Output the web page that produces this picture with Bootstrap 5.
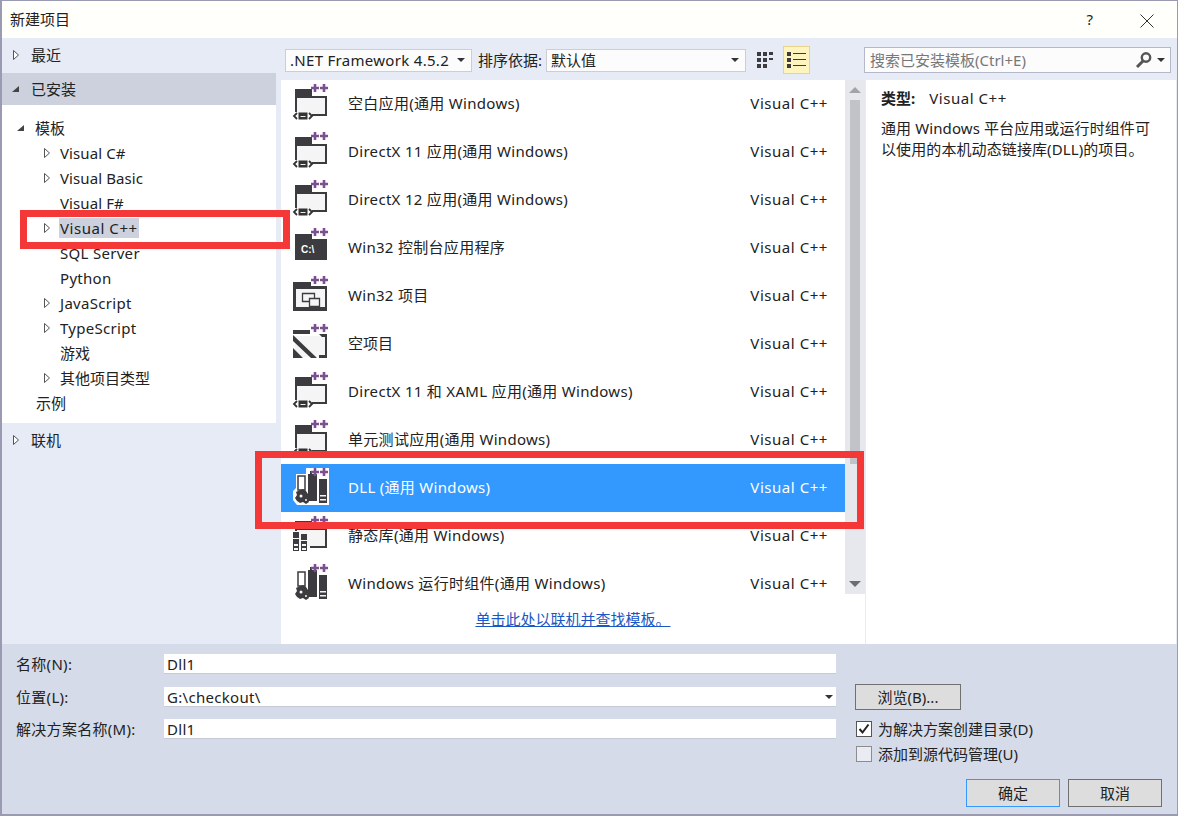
<!DOCTYPE html>
<html lang="zh-CN">
<head>
<meta charset="UTF-8" />
<title>新建项目</title>
<link href="https://cdn.jsdelivr.net/npm/bootstrap@5.3.0/dist/css/bootstrap.min.css" rel="stylesheet" />
<style>
    html, body { margin: 0; background: #fff; }
    body {
        font-family: "Noto Sans", "Noto Sans CJK SC", sans-serif;
        font-size: 15px;
        line-height: 20px;
        color: #222;
    }
    .defs-hold { position: absolute; }
    .lat { letter-spacing: .3px; }
    .lat-s { letter-spacing: .1px; }
    .vc { letter-spacing: .55px; }
    .dlg {
        position: relative;
        width: 1178px;
        height: 816px;
        overflow: hidden;
        border: 1px solid #9a9ab2;
        border-bottom-width: 2px;
        border-left-width: 2px;
        display: flex;
        flex-direction: column;
        background: #e6ebf6;
    }
    .dlg-title { height: 37px; flex: none; background: #fffffb; padding: 8px 8px 0; justify-content: space-between; }
    .dlg-title .tb-btns { gap: 46px; padding-right: 14px; }
    .dlg-main { flex: none; height: 606px; }

    /* left tree */
    .side { width: 274px; flex: none; }
    .side-head { height: 32px; padding-left: 10px; gap: 11px; align-items: center; }
    .side-head.on { background: #ccd1dd; }
    .side-head.first { height: 35px; padding-bottom: 2px; }
    .tree { background: #fff; height: 318px; padding-top: 10px; }
    .tree-row { height: 25px; align-items: center; }
    .tree-row.lv1 { padding-left: 14px; gap: 9px; }
    .tree-row.lv2 { padding-left: 41px; gap: 9px; }
    .tree-row.lv2.plain { padding-left: 58px; }
    .tree-row.lv0 { padding-left: 34px; }
    .sel-lbl { background: #ccd1dd; padding: 0 1px; margin-left: -1px; }
    .side-foot { padding: 7px 0 0 10px; gap: 11px; align-items: center; }
    .tri { flex: none; display: block; }

    /* toolbar */
    .mid { width: 584px; flex: none; margin-left: 5px; padding-top: 9px; }
    .tools { height: 26px; padding-left: 4px; align-items: center; }
    .dd {
        height: 23px;
        background: #fcfcfd;
        border: 1px solid #ccced6;
        align-items: center;
        justify-content: space-between;
        padding: 0 6px 0 4px;
        flex: none;
    }
    .dd-fw { width: 187px; margin-right: 6px; }
    .dd-sort { width: 200px; }
    .sort-lbl { width: 68px; flex: none; }
    .caret-d { width: 0; height: 0; border-left: 4px solid transparent; border-right: 4px solid transparent; border-top: 4px solid #333; flex: none; }
    .view-a { margin-left: 11px; display: block; flex: none; }
    .view-b { margin-left: 10px; width: 27px; height: 28px; flex: none; background: #fdf4bf; border: 1px solid #e9d48c; display: flex; align-items: center; justify-content: center; }

    /* template list */
    .list-wrap { margin-top: 7px; height: 514px; background: #fff; }
    .tpl-list { width: 564px; flex: none; }
    .tpl-row { height: 48px; align-items: center; padding: 0 17px 2px 11px; }
    .tpl-row svg { flex: none; width: 38px; height: 40px; margin-right: 18px; }
    .tpl-row .nm { flex: 1 1 auto; }
    .tpl-row.sel { background: #3399ff; color: #fff; }
    .scr { width: 20px; flex: none; background: #e7e8ed; flex-direction: column; align-items: center; position: relative; }
    .scr-thumb { width: 10px; height: 364px; background: #c2c3c9; margin-top: 20px; }
    .scr-up { position: absolute; top: 7px; left: 4px; border-left: 6px solid transparent; border-right: 6px solid transparent; border-bottom: 6px solid #a2a4ac; }
    .scr-dn { position: absolute; bottom: 7px; left: 4px; border-left: 6px solid transparent; border-right: 6px solid transparent; border-top: 6px solid #6a6d76; }
    .online-row { height: 50px; background: #fff; justify-content: center; padding-top: 15px; }
    .online-row a { color: #1b57c4; text-decoration: underline; }

    /* right side */
    .info-col { width: 312px; flex: none; margin-left: -1px; padding-top: 9px; }
    .search-box {
        height: 26px;
        width: 307px;
        background: #fcfcfd;
        border: 1px solid #b4b8c8;
        align-items: center;
        justify-content: space-between;
        color: #777;
        padding: 0 5px;
    }
    .info-pane { margin: 7px 0 0 2px; height: 564px; background: #fff; padding: 8px 15px 0; line-height: 21px; }
    .info-type { margin-bottom: 9px; }
    .info-type b { font-weight: 700; margin-right: 14px; }

    /* bottom */
    .dlg-foot { flex: 1 1 auto; background: #d6dbe9; padding: 10px 0 0 14px; position: relative; }
    .fld-row { height: 32px; align-items: flex-start; }
    .fld-row.top { height: 33px; }
    .fld-lbl { width: 148px; flex: none; }
    .fld-in {
        width: 672px;
        height: 20px;
        background: #fff;
        padding: 0 3px;
        flex: none;
        align-items: center;
        justify-content: space-between;
        border-bottom: 1px solid #c6cad6;
    }
    .foot-left { width: 839px; flex: none; }
    .foot-right { width: 320px; flex: none; padding-top: 30px; }
    .vs-btn {
        background: #dddddd;
        border: 1px solid #707070;
        border-radius: 0;
        color: #222;
        font-size: 15px;
        line-height: 20px;
        padding: 0;
        text-align: center;
        display: block;
    }
    .vs-btn.b-browse { width: 106px; height: 26px; margin-bottom: 6px; }
    .vs-chk { height: 25px; align-items: center; gap: 6px; margin-left: 1px; }
    .vs-box { width: 16px; height: 16px; border: 1px solid #8d8d8d; background: #e9ecf2; flex: none; display: flex; align-items: center; justify-content: center; }
    .vs-box.on { background: #fff; border-color: #555; }
    .act-row { position: absolute; right: 15px; bottom: 7px; gap: 8px; }
    .act-row .vs-btn { width: 94px; height: 28px; }
    .act-row .vs-btn.prim { border-color: #3399ff; }

    /* red annotations over the screenshot */
    .mark-box { position: absolute; border: 7px solid #f43838; pointer-events: none; }
    .mark-a { left: 18px; top: 209px; width: 270px; height: 39px; }
    .mark-b { left: 253px; top: 450px; width: 609px; height: 78px; }
</style>
</head>
<body>

<svg width="0" height="0" class="defs-hold">
    <defs>
        <path id="pp" d="M19 5h8M23 1v8M28 5h8M32 1v8" stroke="#7d4f91" stroke-width="2.6" fill="none" />
        <g id="tag">
            <path d="M5 30l-3 3 3 3M17 30l3 3-3 3" stroke="#333" stroke-width="1.8" fill="none" />
            <rect x="6.5" y="29.5" width="9" height="7" fill="#333" />
            <rect x="8.5" y="33" width="5" height="1" fill="#eee" />
        </g>
        <symbol id="i-app" viewBox="0 0 38 40">
            <path d="M5 15h28v16H5z" fill="#f5f5f5" />
            <path d="M3 6h17v7h15v20H20v-2h13V15H5v14H3z" fill="#3c3c40" />
            <use href="#pp" />
            <use href="#tag" />
        </symbol>
        <symbol id="i-con" viewBox="0 0 38 40">
            <path d="M3 7h17v5h15v21H3z" fill="#3c3c40" />
            <text x="9" y="26" font-family="Liberation Sans, sans-serif" font-size="10" font-weight="700" fill="#fff">C:\</text>
            <use href="#pp" />
        </symbol>
        <symbol id="i-win" viewBox="0 0 38 40">
            <path d="M1 7h18v4h16v25H1zM4 14v18h29V14z" fill="#3c3c40" fill-rule="evenodd" />
            <path d="M4 14h29v18H4z" fill="#f5f5f5" />
            <path d="M10.5 18.5h12v8h-12z" fill="#f5f5f5" stroke="#3c3c40" stroke-width="1.3" />
            <path d="M17.5 23.5h10v8h-10z" fill="#f5f5f5" stroke="#3c3c40" stroke-width="1.3" />
            <use href="#pp" />
        </symbol>
        <symbol id="i-empty" viewBox="0 0 38 40">
            <path d="M3 13h30v21H3z" fill="#f5f5f5" />
            <path d="M1 7h17v4h17v24H27v-3h6V14h-3l-3-3H1z" fill="#3c3c40" />
            <path d="M1 12l24 23h-6L1 18zM1 25l10 10H1z" fill="#3c3c40" />
            <use href="#pp" />
        </symbol>
        <symbol id="i-lib" viewBox="0 0 38 40">
            <path d="M5 15h28v16H5z" fill="#f5f5f5" />
            <path d="M3 6h17v7h15v20H18v-2h15V15H5v1H3z" fill="#3c3c40" />
            <use href="#pp" />
            <path d="M1 17h6v19H1zM9 19h6v17H9z" fill="#3c3c40" />
            <path d="M1 23h6v1H1zM9 25h6v1H9zM2 29h4v2H2zM2 33h4v2H2zM10 29h4v2h-4zM10 33h4v2h-4z" fill="#f5f5f5" />
        </symbol>
        <g id="comp">
            <path d="M6 9h7v14H6z" fill="#fff" stroke="#3c3c40" stroke-width="1.5" />
            <path d="M16 7h2V4h2v3h5v27h-9z" fill="#3c3c40" />
            <path d="M27 12h8v24h-8z" fill="#3c3c40" />
            <path d="M28 28h6v1.5h-6zM28 32h6v1.5h-6z" fill="#f5f5f5" />
            <path d="M8 23l3-1 3 2 2 3 2 1 1 3-3 1 1 3-3 2-3-2-3 1-3-2-2-3 2-3-1-3z" fill="#3c3c40" />
            <circle cx="9" cy="29" r="1.5" fill="#f5f5f5" />
            <circle cx="14" cy="33" r="1" fill="#f5f5f5" />
        </g>
        <symbol id="i-rt" viewBox="0 0 38 40">
            <use href="#comp" />
            <use href="#pp" />
        </symbol>
        <symbol id="i-dll" viewBox="0 0 38 40">
            <path d="M4 7h10v-6h23v37H5l-4-5v-9l3-3z" fill="#fff" />
            <use href="#comp" />
            <use href="#pp" />
        </symbol>
    </defs>
</svg>

<div class="dlg">
    <div class="dlg-title d-flex">
        <div>新建项目</div>
        <div class="tb-btns d-flex align-items-start">
            <span>?</span>
            <svg width="16" height="16" viewBox="0 0 16 16" class="mt-1"><path d="M1.5 1.5l13 13M14.5 1.5l-13 13" stroke="#333" stroke-width="1" fill="none" /></svg>
        </div>
    </div>

    <div class="dlg-main d-flex">
        <div class="side">
            <div class="side-head first d-flex">
                <svg class="tri" width="8" height="12" viewBox="0 0 8 12"><path d="M1.5 1.5l5 4.500-5 4.500z" fill="#fff" stroke="#555" /></svg>
                <span>最近</span>
            </div>
            <div class="side-head on d-flex">
                <svg class="tri" width="8" height="12" viewBox="0 0 8 12"><path d="M0 9l7-6v6z" fill="#444" /></svg>
                <span>已安装</span>
            </div>
            <div class="tree">
                <div class="tree-row lv1 d-flex">
                    <svg class="tri" width="10" height="12" viewBox="0 0 10 12"><path d="M1 9l7-6v6z" fill="#444" /></svg>
                    <span>模板</span>
                </div>
                <div class="tree-row lv2 d-flex">
                    <svg class="tri" width="8" height="12" viewBox="0 0 8 12"><path d="M1.5 1.5l5 4.500-5 4.500z" fill="#fff" stroke="#555" /></svg>
                    <span class="lat-s">Visual C#</span>
                </div>
                <div class="tree-row lv2 d-flex">
                    <svg class="tri" width="8" height="12" viewBox="0 0 8 12"><path d="M1.5 1.5l5 4.500-5 4.500z" fill="#fff" stroke="#555" /></svg>
                    <span class="lat-s">Visual Basic</span>
                </div>
                <div class="tree-row lv2 plain d-flex"><span class="lat-s">Visual F#</span></div>
                <div class="tree-row lv2 d-flex">
                    <svg class="tri" width="8" height="12" viewBox="0 0 8 12"><path d="M1.5 1.5l5 4.500-5 4.500z" fill="#fff" stroke="#555" /></svg>
                    <span class="sel-lbl vc">Visual C++</span>
                </div>
                <div class="tree-row lv2 plain d-flex"><span class="lat">SQL Server</span></div>
                <div class="tree-row lv2 plain d-flex"><span class="lat">Python</span></div>
                <div class="tree-row lv2 d-flex">
                    <svg class="tri" width="8" height="12" viewBox="0 0 8 12"><path d="M1.5 1.5l5 4.500-5 4.500z" fill="#fff" stroke="#555" /></svg>
                    <span class="lat">JavaScript</span>
                </div>
                <div class="tree-row lv2 d-flex">
                    <svg class="tri" width="8" height="12" viewBox="0 0 8 12"><path d="M1.5 1.5l5 4.500-5 4.500z" fill="#fff" stroke="#555" /></svg>
                    <span class="lat">TypeScript</span>
                </div>
                <div class="tree-row lv2 plain d-flex"><span>游戏</span></div>
                <div class="tree-row lv2 d-flex">
                    <svg class="tri" width="8" height="12" viewBox="0 0 8 12"><path d="M1.5 1.5l5 4.500-5 4.500z" fill="#fff" stroke="#555" /></svg>
                    <span>其他项目类型</span>
                </div>
                <div class="tree-row lv0 d-flex"><span>示例</span></div>
            </div>
            <div class="side-foot d-flex">
                <svg class="tri" width="8" height="12" viewBox="0 0 8 12"><path d="M1.5 1.5l5 4.500-5 4.500z" fill="#fff" stroke="#555" /></svg>
                <span>联机</span>
            </div>
        </div>

        <div class="mid">
            <div class="tools d-flex">
                <div class="dd dd-fw d-flex"><span class="lat">.NET Framework 4.5.2</span><i class="caret-d"></i></div>
                <span class="sort-lbl">排序依据:</span>
                <div class="dd dd-sort d-flex"><span>默认值</span><i class="caret-d"></i></div>
                <svg class="view-a" width="16" height="16" viewBox="0 0 16 16"><path d="M0 0h4v4H0zM6 0h4v4H6zM12 0h4v3h-4zM0 6h4v4H0zM6 6h4v4H6zM12 6h4v2h-4zM0 12h4v4H0zM6 12h4v4H6z" fill="#3c3c40" /></svg>
                <div class="view-b">
                    <svg width="19" height="16" viewBox="0 0 19 16"><path d="M0 0h4v4H0zM0 6h4v4H0zM0 12h4v4H0z" fill="#3c3c40" /><path d="M6 1.5h13M6 7.500h13M6 13.500h13" stroke="#3c3c40" stroke-width="1.2" /></svg>
                </div>
            </div>
            <div class="list-wrap d-flex">
                <div class="tpl-list">
                    <div class="tpl-row d-flex"><svg><use href="#i-app" /></svg><span class="nm lat">空白应用(通用 Windows)</span><span class="vc">Visual C++</span></div>
                    <div class="tpl-row d-flex"><svg><use href="#i-app" /></svg><span class="nm lat">DirectX 11 应用(通用 Windows)</span><span class="vc">Visual C++</span></div>
                    <div class="tpl-row d-flex"><svg><use href="#i-app" /></svg><span class="nm lat">DirectX 12 应用(通用 Windows)</span><span class="vc">Visual C++</span></div>
                    <div class="tpl-row d-flex"><svg><use href="#i-con" /></svg><span class="nm lat">Win32 控制台应用程序</span><span class="vc">Visual C++</span></div>
                    <div class="tpl-row d-flex"><svg><use href="#i-win" /></svg><span class="nm lat">Win32 项目</span><span class="vc">Visual C++</span></div>
                    <div class="tpl-row d-flex"><svg><use href="#i-empty" /></svg><span class="nm">空项目</span><span class="vc">Visual C++</span></div>
                    <div class="tpl-row d-flex"><svg><use href="#i-app" /></svg><span class="nm lat">DirectX 11 和 XAML 应用(通用 Windows)</span><span class="vc">Visual C++</span></div>
                    <div class="tpl-row d-flex"><svg><use href="#i-app" /></svg><span class="nm lat">单元测试应用(通用 Windows)</span><span class="vc">Visual C++</span></div>
                    <div class="tpl-row sel d-flex"><svg><use href="#i-dll" /></svg><span class="nm lat">DLL (通用 Windows)</span><span class="vc">Visual C++</span></div>
                    <div class="tpl-row d-flex"><svg><use href="#i-lib" /></svg><span class="nm lat">静态库(通用 Windows)</span><span class="vc">Visual C++</span></div>
                    <div class="tpl-row d-flex"><svg><use href="#i-rt" /></svg><span class="nm lat">Windows 运行时组件(通用 Windows)</span><span class="vc">Visual C++</span></div>
                </div>
                <div class="scr d-flex">
                    <i class="scr-up"></i>
                    <div class="scr-thumb"></div>
                    <i class="scr-dn"></i>
                </div>
            </div>
            <div class="online-row d-flex"><a href="#">单击此处以联机并查找模板。</a></div>
        </div>

        <div class="info-col">
            <div class="search-box d-flex">
                <span>搜索已安装模板(Ctrl+E)</span>
                <span class="d-flex align-items-center gap-1">
                    <svg width="18" height="18" viewBox="0 0 18 18"><circle cx="11" cy="6.5" r="4.2" fill="none" stroke="#555" stroke-width="2.4" /><path d="M8 10l-6 6" stroke="#555" stroke-width="3" /></svg>
                    <i class="caret-d"></i>
                </span>
            </div>
            <div class="info-pane">
                <div class="info-type"><b>类型:</b><span class="vc">Visual C++</span></div>
                <div class="lat-s">通用 Windows 平台应用或运行时组件可以使用的本机动态链接库(DLL)的项目。</div>
            </div>
        </div>
    </div>

    <div class="dlg-foot d-flex">
        <div class="foot-left">
            <div class="fld-row top d-flex"><span class="fld-lbl lat">名称(N):</span><div class="fld-in d-flex lat">Dll1</div></div>
            <div class="fld-row d-flex"><span class="fld-lbl lat">位置(L):</span><div class="fld-in d-flex"><span class="lat">G:\checkout\</span><i class="caret-d"></i></div></div>
            <div class="fld-row d-flex"><span class="fld-lbl lat">解决方案名称(M):</span><div class="fld-in d-flex lat">Dll1</div></div>
        </div>
        <div class="foot-right">
            <button type="button" class="vs-btn b-browse">浏览(B)...</button>
            <div class="vs-chk d-flex">
                <span class="vs-box on"><svg width="12" height="12" viewBox="0 0 12 12"><path d="M1.5 6l3 3.500 6-8" fill="none" stroke="#222" stroke-width="2" /></svg></span>
                <span>为解决方案创建目录(D)</span>
            </div>
            <div class="vs-chk d-flex">
                <span class="vs-box"></span>
                <span>添加到源代码管理(U)</span>
            </div>
        </div>
        <div class="act-row d-flex">
            <button type="button" class="vs-btn prim">确定</button>
            <button type="button" class="vs-btn">取消</button>
        </div>
    </div>

    <div class="mark-box mark-a"></div>
    <div class="mark-box mark-b"></div>
</div>

</body>
</html>
